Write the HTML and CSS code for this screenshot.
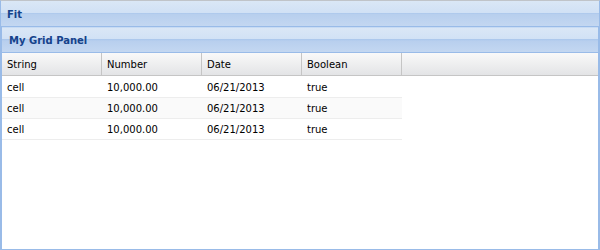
FILE: index.html
```html
<!DOCTYPE html>
<html lang="en">
<head>
    <meta charset="UTF-8">
    <title>Fit</title>
    <link rel="stylesheet" href="styles.css">
</head>
<body>
    <div class="fit-panel">
        <div class="panel-header outer">
            <span class="panel-title">Fit</span>
        </div>
        <div class="fit-body">
            <div class="grid-panel">
                <div class="panel-header inner">
                    <span class="panel-title">My Grid Panel</span>
                </div>
                <div class="grid-header">
                    <div class="col-head">String</div>
                    <div class="col-head">Number</div>
                    <div class="col-head">Date</div>
                    <div class="col-head">Boolean</div>
                    <div class="col-head filler"></div>
                </div>
                <div class="grid-body">
                    <div class="grid-row">
                        <div class="cell">cell</div>
                        <div class="cell">10,000.00</div>
                        <div class="cell">06/21/2013</div>
                        <div class="cell">true</div>
                    </div>
                    <div class="grid-row alt">
                        <div class="cell">cell</div>
                        <div class="cell">10,000.00</div>
                        <div class="cell">06/21/2013</div>
                        <div class="cell">true</div>
                    </div>
                    <div class="grid-row">
                        <div class="cell">cell</div>
                        <div class="cell">10,000.00</div>
                        <div class="cell">06/21/2013</div>
                        <div class="cell">true</div>
                    </div>
                </div>
            </div>
        </div>
    </div>
</body>
</html>
```

FILE: styles.css
```css
body {
    margin: 0;
    padding: 0;
    font-family: "DejaVu Sans", Verdana, sans-serif;
    background: #fff;
}
.fit-panel {
    width: 600px;
    height: 250px;
    display: flex;
    flex-direction: column;
}
.panel-header {
    height: 26px;
    box-sizing: border-box;
    display: flex;
    align-items: center;
    padding-left: 7px;
    border: 1px solid #99bbe8;
    background: linear-gradient(to bottom, #dae7f6 0%, #d1e1f5 46%, #abc7ec 48%, #b8cfee 54%, #c3d7f1 100%);
}
.panel-header.outer {
    height: 27px;
    padding-left: 6px;
    border-top-color: #c0c4c9;
}
.panel-header.inner {
    border-left: none;
    border-right: none;
    border-top-color: #c7dbf4;
}
.panel-title {
    font-size: 10px;
    font-weight: bold;
    color: #15428b;
    padding-top: 1px;
}
.fit-body {
    flex: 1;
    display: flex;
    border: 1px solid #99bbe8;
    border-top: none;
    border-left-width: 2px;
    border-right-width: 2px;
}
.grid-panel {
    flex: 1;
    display: flex;
    flex-direction: column;
    background: #fff;
}
.grid-header {
    display: flex;
    height: 23px;
    box-sizing: border-box;
    border-bottom: 1px solid #c5c5c5;
    background: linear-gradient(to bottom, #f9f9f9, #e3e4e6);
}
.col-head {
    width: 100px;
    box-sizing: border-box;
    border-right: 1px solid #c5c5c5;
    font-size: 10px;
    color: #000;
    padding-left: 5px;
    display: flex;
    align-items: center;
}
.col-head.filler {
    flex: 1;
    border-right: none;
}
.grid-body {
    width: 400px;
    padding-top: 1px;
}
.grid-row {
    display: flex;
    height: 21px;
    box-sizing: border-box;
    border-bottom: 1px solid #ededed;
}
.grid-row.alt {
    background: #fafafa;
}
.cell {
    width: 100px;
    font-size: 10px;
    padding-left: 5px;
    box-sizing: border-box;
    display: flex;
    align-items: center;
}
```
